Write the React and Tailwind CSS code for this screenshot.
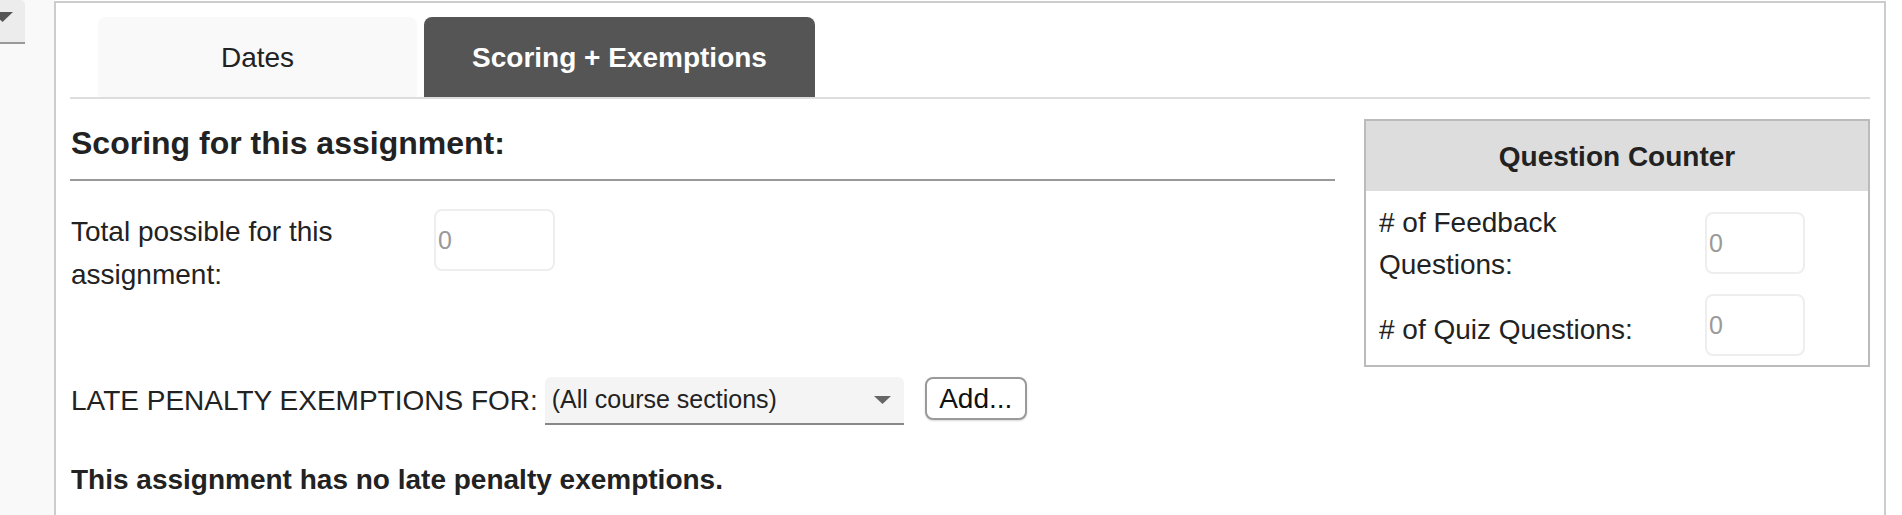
import React from "react";

const font = { fontFamily: '"Liberation Sans", Arial, Helvetica, sans-serif' };

function NumberBox({ className = "" }) {
  return (
    <input
      type="text"
      placeholder="0"
      className={
        "h-[62px] rounded-[8px] border-2 border-[#eeeeee] bg-white pl-[2px] text-[25px] text-[#222] placeholder:text-[#9a9a9a] outline-none " +
        className
      }
    />
  );
}

function Tabs() {
  return (
    <div className="flex gap-[7px] border-b-2 border-[#dddddd] pl-[28px]">
      <button className="flex h-[80px] w-[319px] items-center justify-center rounded-t-[8px] bg-[#f9f9f9] pt-[2px] text-[28px] text-[#222]">
        Dates
      </button>
      <button className="flex h-[80px] w-[391px] items-center justify-center rounded-t-[8px] bg-[#555555] pt-[2px] text-[28px] font-bold text-white">
        Scoring + Exemptions
      </button>
    </div>
  );
}

function QuestionCounter() {
  return (
    <div className="w-[506px] shrink-0 border-2 border-[#bbbbbb] self-start">
      <div className="flex h-[70px] items-center justify-center bg-[#dddddd] pt-[2px] text-[28px] font-bold text-[#222]">
        Question Counter
      </div>
      <div className="pt-[10px]">
        <div className="flex h-[84px] items-center pl-[13px]">
          <div className="w-[326px] pt-[2px] text-[28px] leading-[42px] text-[#222]">
            # of Feedback
            <br />
            Questions:
          </div>
          <NumberBox className="w-[100px] h-[61px]" />
        </div>
        <div className="flex h-[80px] items-center pl-[13px]">
          <div className="w-[326px] pt-[10px] text-[28px] leading-[42px] text-[#222]">
            # of Quiz Questions:
          </div>
          <NumberBox className="w-[100px] h-[61px]" />
        </div>
      </div>
    </div>
  );
}

export default function App() {
  return (
    <div className="flex h-[515px] w-[1902px] overflow-hidden bg-white" style={font}>
      {/* sidebar edge */}
      <div className="w-[54px] shrink-0 bg-[#f9f9f9]">
        <div className="relative h-[44px] w-[25px] overflow-hidden rounded-tr-[5px] border-b-2 border-[#999999] bg-[#ececec]">
          <svg className="absolute left-[-8px] top-[12px]" width="21" height="10" viewBox="0 0 21 10">
            <path d="M0 0 H21 L10.5 10 Z" fill="#555555" />
          </svg>
        </div>
      </div>

      {/* main panel */}
      <div className="mt-[1px] min-h-[600px] w-[1832px] shrink-0 border-2 border-b-0 border-[#cccccc] px-[14px] pt-[14px] text-[#222]">
        <Tabs />

        <div className="mt-[20px] flex gap-[29px]">
          <div className="flex-1">
            <h3 className="border-b-2 border-[#999999] pb-[12px] pl-[1px] text-[32px] font-bold leading-[48px]">
              Scoring for this assignment:
            </h3>
            <div className="mt-[28px] flex items-start pl-[1px]">
              <div className="w-[363px] pt-[1px] text-[28px] leading-[43px]">
                Total possible for this
                <br />
                assignment:
              </div>
              <NumberBox className="w-[121px]" />
            </div>
          </div>
          <QuestionCounter />
        </div>

        <div className="mt-[10px] flex h-[48px] items-center pl-[1px]">
          <span className="text-[28px] leading-[42px]">LATE PENALTY EXEMPTIONS FOR:</span>
          <div className="ml-[7px] flex h-[48px] w-[359px] items-center justify-between rounded-t-[6px] border-b-2 border-[#888888] bg-[#f4f4f4] pl-[7px] pr-[13px]">
            <span className="text-[25px]">(All course sections)</span>
            <svg width="17" height="8" viewBox="0 0 17 8">
              <path d="M0 0 H17 L8.5 8 Z" fill="#666666" />
            </svg>
          </div>
          <button className="ml-[21px] flex h-[43px] w-[102px] items-center justify-center self-start rounded-[8px] border-2 border-[#9a9a9a] bg-white text-[28px] text-[#111] shadow-[0_1px_2px_rgba(0,0,0,0.15)]">
            Add...
          </button>
        </div>

        <p className="mt-[34px] pl-[1px] text-[28px] font-bold leading-[42px]">
          This assignment has no late penalty exemptions.
        </p>
      </div>
    </div>
  );
}
